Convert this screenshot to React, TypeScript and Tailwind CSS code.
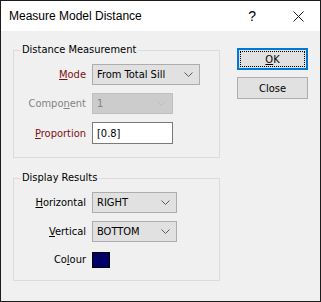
import { ReactNode } from 'react'

const FONT = "font-['DejaVu_Sans_Condensed','Liberation_Sans',Arial,sans-serif]"

function Chevron({ disabled }: { disabled?: boolean }) {
  return (
    <svg width="9" height="5" viewBox="0 0 9 5" className="shrink-0">
      <path
        d="M0.5 0.5 L4.5 4.5 L8.5 0.5"
        fill="none"
        stroke={disabled ? '#bdbdbd' : '#5a5a5a'}
        strokeWidth="1"
      />
    </svg>
  )
}

function Combo({ value, width, disabled }: { value: string; width: string; disabled?: boolean }) {
  return (
    <div
      className={`${width} h-[21px] flex items-center justify-between pl-[4px] pr-[6px] border ${
        disabled ? 'bg-[#cccccc] border-[#bfbfbf] text-[#838383]' : 'bg-[#e1e1e1] border-[#adadad] text-black'
      }`}
    >
      <span className="leading-none">{value}</span>
      <Chevron disabled={disabled} />
    </div>
  )
}

function Row({ label, children }: { label: ReactNode; children: ReactNode }) {
  return (
    <div className="flex items-center gap-[6px]">
      <div className="w-[72px] text-right leading-none">{label}</div>
      {children}
    </div>
  )
}

function Group({ title, children, className }: { title: string; children: ReactNode; className?: string }) {
  return (
    <fieldset className={`w-[207px] border border-[#dcdcdc] ${className ?? ''}`}>
      <legend className="ml-[7px] px-[1px] leading-[14px] text-black">{title}</legend>
      {children}
    </fieldset>
  )
}

export default function App() {
  return (
    <div className={`${FONT} w-[321px] h-[302px] border border-[#1c1c1c] flex flex-col text-[11px] text-black`}>
      <div className="h-[30px] bg-white flex items-center shrink-0">
        <span className="ml-[8px] text-[12px] font-['Liberation_Sans',Arial,sans-serif]">Measure Model Distance</span>
        <span className="ml-auto text-[14px] mr-[37px] font-['Liberation_Sans',Arial,sans-serif]">?</span>
        <svg width="11" height="11" viewBox="0 0 11 11" className="mr-[16px]">
          <path d="M0.5 0.5 L10.5 10.5 M10.5 0.5 L0.5 10.5" stroke="#1a1a1a" strokeWidth="1" />
        </svg>
      </div>

      <div className="flex-1 bg-[#f0f0f0] flex items-start pl-[12px]">
        <div className="pt-[12px] flex flex-col gap-[13px]">
          <Group title="Distance Measurement" className="pb-[13px]">
            <div className="mt-[7px] flex flex-col gap-[8px]">
              <Row label={<span className="text-[#7b1010]"><u>M</u>ode</span>}>
                <Combo value="From Total Sill" width="w-[108px]" />
              </Row>
              <Row label={<span className="text-[#838383]">Compo<u>n</u>ent</span>}>
                <Combo value="1" width="w-[81px]" disabled />
              </Row>
              <Row label={<span className="text-[#7b1010]"><u>P</u>roportion</span>}>
                <div className="w-[81px] h-[22px] bg-white border border-[#7a7a7a] flex items-center pl-[4px] leading-none">
                  [0.8]
                </div>
              </Row>
            </div>
          </Group>

          <Group title="Display Results" className="pb-[12px]">
            <div className="mt-[7px] flex flex-col gap-[8px]">
              <Row label={<span><u>H</u>orizontal</span>}>
                <Combo value="RIGHT" width="w-[85px]" />
              </Row>
              <Row label={<span><u>V</u>ertical</span>}>
                <Combo value="BOTTOM" width="w-[85px]" />
              </Row>
              <Row label={<span>Co<u>l</u>our</span>}>
                <div className="mt-[2px] w-[18px] h-[16px] border border-black bg-[#000066]" />
              </Row>
            </div>
          </Group>
        </div>

        <div className="ml-[17px] pt-[17px] flex flex-col gap-[7px]">
          <button className="w-[71px] h-[22px] bg-[#e1e1e1] border-2 border-[#0078d7] p-[1px]">
            <div className="w-full h-full border border-dotted border-black flex items-center justify-center leading-none">
              <span><u>O</u>K</span>
            </div>
          </button>
          <button className="w-[71px] h-[22px] bg-[#e1e1e1] border border-[#adadad] flex items-center justify-center leading-none">
            Close
          </button>
        </div>
      </div>
    </div>
  )
}
